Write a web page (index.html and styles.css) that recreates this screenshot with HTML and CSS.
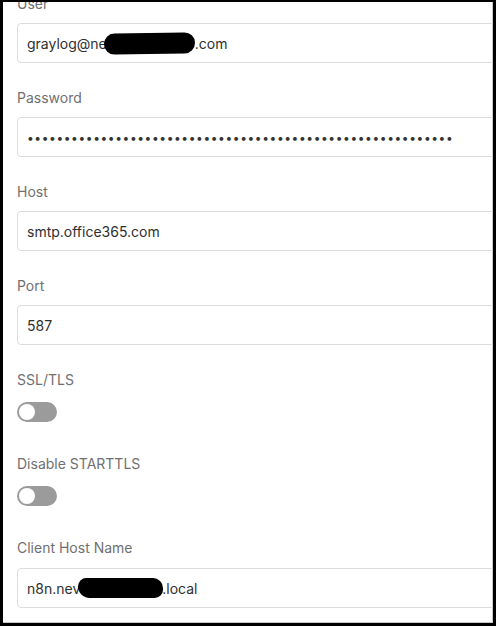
FILE: index.html
```html
<!DOCTYPE html>
<html lang="en">
<head>
<meta charset="utf-8">
<title>SMTP credentials</title>
<link rel="stylesheet" href="styles.css">
</head>
<body>
<div class="frame">
  <form class="form">
    <div class="field">
      <label class="label">User</label>
      <div class="input"><span>graylog@ne</span><span class="redact redact-user"></span><span>.com</span></div>
    </div>
    <div class="field">
      <label class="label">Password</label>
      <div class="input password">••••••••••••••••••••••••••••••••••••••••••••••••••••••••••</div>
    </div>
    <div class="field">
      <label class="label">Host</label>
      <div class="input">smtp.office365.com</div>
    </div>
    <div class="field">
      <label class="label">Port</label>
      <div class="input">587</div>
    </div>
    <div class="field toggle-field">
      <label class="label">SSL/TLS</label>
      <span class="switch"><span class="knob"></span></span>
    </div>
    <div class="field toggle-field">
      <label class="label">Disable STARTTLS</label>
      <span class="switch"><span class="knob"></span></span>
    </div>
    <div class="field last">
      <label class="label">Client Host Name</label>
      <div class="input"><span>n8n.nev</span><span class="redact redact-host"></span><span>.local</span></div>
    </div>
  </form>
</div>
</body>
</html>
```

FILE: styles.css
```css
html, body {
  margin: 0;
  padding: 0;
  background: #000;
}

.frame {
  box-sizing: border-box;
  width: 496px;
  height: 626px;
  background: #fff;
  border-style: solid;
  border-color: #000;
  border-width: 2px 3px 3px 3px;
  overflow: hidden;
  box-shadow: inset -1px -1px 0 #c8c8c8;
  font-family: Inter, "Noto Sans", sans-serif;
}

.form {
  margin: -8px 0 0 14px;
  width: 560px;
  display: flex;
  flex-direction: column;
}

.field {
  display: flex;
  flex-direction: column;
  margin-bottom: 25px;
}

.label {
  font-size: 14px;
  line-height: 20px;
  color: #707070;
  margin-bottom: 9px;
}

.last .label {
  margin-bottom: 10px;
}

.input {
  box-sizing: border-box;
  height: 40px;
  border: 1px solid #dcdcdc;
  border-radius: 4px;
  padding: 0 9px;
  display: flex;
  align-items: center;
  font-size: 14px;
  color: #2f2f2f;
  white-space: nowrap;
}

.password {
  font-size: 12px;
  letter-spacing: 0.6px;
  color: #333;
}

.redact {
  display: inline-block;
  background: #000;
  border-radius: 11px;
}

.redact-user {
  width: 91px;
  height: 21px;
  margin-left: -3px;
  transform: rotate(-1deg);
}

.redact-host {
  width: 85px;
  height: 20px;
  margin-left: -2px;
  margin-right: -1px;
  border-radius: 10px 12px 10px 14px;
}

.toggle-field {
  margin-bottom: 32px;
}

.toggle-field .label {
  margin-bottom: 12px;
}

.switch {
  box-sizing: border-box;
  width: 40px;
  height: 20px;
  border-radius: 10px;
  background: #9b9b9b;
  padding: 2px;
  display: flex;
  align-items: center;
}

.knob {
  box-sizing: border-box;
  width: 16px;
  height: 16px;
  border-radius: 50%;
  background: #fff;
}
```
